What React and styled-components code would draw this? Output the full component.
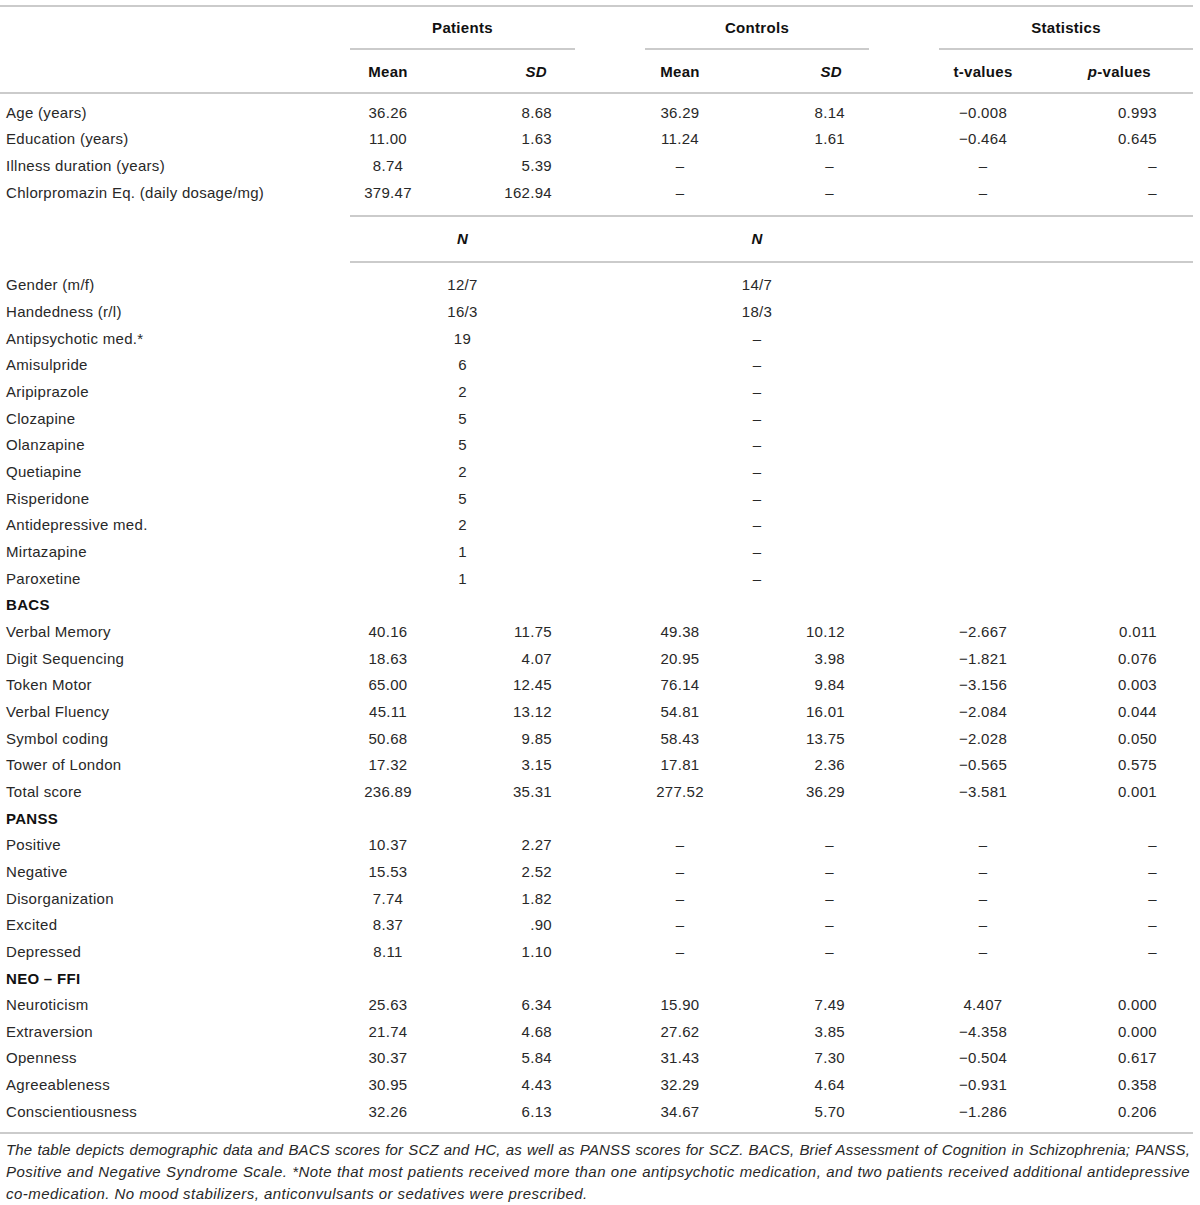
import styled, { createGlobalStyle } from 'styled-components'

const GlobalStyle = createGlobalStyle`
  body {
    margin: 0;
    background: #fff;
    color: #282828;
    font-family: "Liberation Sans", Arial, sans-serif;
    font-size: 15px;
    letter-spacing: 0.3px;
  }
`

const TEMPLATE = '350px 76px 149px 70px 70px 154px 70px 88px 166px'
const RULE = '2px solid #cbcbcb'

// per value column: where the text sits in its cell
const VALUE_COLS = [
  { align: 'center' },
  { align: 'right', pr: 23 },
  { align: 'center' },
  { align: 'right', pr: 24, dashPr: 35 },
  { align: 'center' },
  { align: 'right', pr: 36 },
]

const rowsTop = [
  ['Age (years)', ['36.26', '8.68', '36.29', '8.14', '−0.008', '0.993']],
  ['Education (years)', ['11.00', '1.63', '11.24', '1.61', '−0.464', '0.645']],
  ['Illness duration (years)', ['8.74', '5.39', '–', '–', '–', '–']],
  ['Chlorpromazin Eq. (daily dosage/mg)', ['379.47', '162.94', '–', '–', '–', '–']],
]

const rowsBottom = [
  { label: 'Gender (m/f)', n: ['12/7', '14/7'] },
  { label: 'Handedness (r/l)', n: ['16/3', '18/3'] },
  { label: 'Antipsychotic med.*', n: ['19', '–'] },
  { label: 'Amisulpride', n: ['6', '–'] },
  { label: 'Aripiprazole', n: ['2', '–'] },
  { label: 'Clozapine', n: ['5', '–'] },
  { label: 'Olanzapine', n: ['5', '–'] },
  { label: 'Quetiapine', n: ['2', '–'] },
  { label: 'Risperidone', n: ['5', '–'] },
  { label: 'Antidepressive med.', n: ['2', '–'] },
  { label: 'Mirtazapine', n: ['1', '–'] },
  { label: 'Paroxetine', n: ['1', '–'] },
  { section: 'BACS' },
  { label: 'Verbal Memory', v: ['40.16', '11.75', '49.38', '10.12', '−2.667', '0.011'] },
  { label: 'Digit Sequencing', v: ['18.63', '4.07', '20.95', '3.98', '−1.821', '0.076'] },
  { label: 'Token Motor', v: ['65.00', '12.45', '76.14', '9.84', '−3.156', '0.003'] },
  { label: 'Verbal Fluency', v: ['45.11', '13.12', '54.81', '16.01', '−2.084', '0.044'] },
  { label: 'Symbol coding', v: ['50.68', '9.85', '58.43', '13.75', '−2.028', '0.050'] },
  { label: 'Tower of London', v: ['17.32', '3.15', '17.81', '2.36', '−0.565', '0.575'] },
  { label: 'Total score', v: ['236.89', '35.31', '277.52', '36.29', '−3.581', '0.001'] },
  { section: 'PANSS' },
  { label: 'Positive', v: ['10.37', '2.27', '–', '–', '–', '–'] },
  { label: 'Negative', v: ['15.53', '2.52', '–', '–', '–', '–'] },
  { label: 'Disorganization', v: ['7.74', '1.82', '–', '–', '–', '–'] },
  { label: 'Excited', v: ['8.37', '.90', '–', '–', '–', '–'] },
  { label: 'Depressed', v: ['8.11', '1.10', '–', '–', '–', '–'] },
  { section: 'NEO – FFI' },
  { label: 'Neuroticism', v: ['25.63', '6.34', '15.90', '7.49', '4.407', '0.000'] },
  { label: 'Extraversion', v: ['21.74', '4.68', '27.62', '3.85', '−4.358', '0.000'] },
  { label: 'Openness', v: ['30.37', '5.84', '31.43', '7.30', '−0.504', '0.617'] },
  { label: 'Agreeableness', v: ['30.95', '4.43', '32.29', '4.64', '−0.931', '0.358'] },
  { label: 'Conscientiousness', v: ['32.26', '6.13', '34.67', '5.70', '−1.286', '0.206'] },
]

const Page = styled.div`
  width: 1193px;
  padding-top: 5px;
`

const Grid = styled.div`
  display: grid;
  grid-template-columns: ${TEMPLATE};
`

const GroupHead = styled(Grid)`
  border-top: ${RULE};
`

const GroupCell = styled.div`
  grid-column: span 2;
  height: 43px;
  box-sizing: border-box;
  border-bottom: ${RULE};
  display: flex;
  align-items: center;
  justify-content: center;
  font-weight: bold;
  color: #111;
`

const SubHead = styled(Grid)`
  height: 44px;
  box-sizing: border-box;
  border-bottom: ${RULE};
  align-items: center;
  font-weight: bold;
  color: #111;
`

const HeadCell = styled.div`
  text-align: ${(p) => p.$align};
  padding-right: ${(p) => p.$pr || 0}px;
`

const Body = styled.div`
  padding: ${(p) => p.$pad};
  border-bottom: ${(p) => (p.$ruled ? RULE : 'none')};
`

const Row = styled(Grid)`
  height: 26.667px;
  align-items: center;
`

const Label = styled.div`
  padding-left: 6px;
  white-space: nowrap;
`

const Section = styled(Label)`
  font-weight: bold;
  color: #111;
`

const Cell = styled.div`
  text-align: ${(p) => p.$align};
  padding-right: ${(p) => p.$pr || 0}px;
  grid-column: ${(p) => (p.$span ? `span ${p.$span}` : 'auto')};
  white-space: nowrap;
`

const NHead = styled(Grid)`
  height: 48px;
`

const NBand = styled.div`
  grid-column: span ${(p) => p.$span || 1};
  box-sizing: border-box;
  border-top: ${RULE};
  border-bottom: ${RULE};
  display: flex;
  align-items: center;
  justify-content: center;
  font-weight: bold;
  font-style: italic;
  color: #111;
`

const Note = styled.div`
  padding-top: 5px;
  font-style: italic;
  line-height: 22px;
`

const NoteLine = styled.div`
  white-space: nowrap;
  letter-spacing: ${(p) => p.$spacing}px;
  text-align: ${(p) => (p.$fill ? 'justify' : 'left')};
  text-align-last: ${(p) => (p.$fill ? 'justify' : 'left')};
  padding-left: 6px;
  padding-right: 3px;
`

function ValueRow({ label, values }) {
  const cells = []
  values.forEach((val, i) => {
    const col = VALUE_COLS[i]
    const pr = val === '–' && col.dashPr ? col.dashPr : col.pr
    cells.push(
      <Cell key={i} $align={col.align} $pr={pr}>
        {val}
      </Cell>
    )
    if (i === 1 || i === 3) cells.push(<div key={`g${i}`} />)
  })
  return (
    <Row>
      <Label>{label}</Label>
      {cells}
    </Row>
  )
}

function CountRow({ label, n }) {
  return (
    <Row>
      <Label>{label}</Label>
      <Cell $align="center" $span={2}>{n[0]}</Cell>
      <div />
      <Cell $align="center" $span={2}>{n[1]}</Cell>
    </Row>
  )
}

export default function App() {
  return (
    <Page>
      <GlobalStyle />
      <GroupHead>
        <div />
        <GroupCell>Patients</GroupCell>
        <div />
        <GroupCell>Controls</GroupCell>
        <div />
        <GroupCell>Statistics</GroupCell>
      </GroupHead>
      <SubHead>
        <div />
        <HeadCell $align="center">Mean</HeadCell>
        <HeadCell $align="right" $pr={28}><i>SD</i></HeadCell>
        <div />
        <HeadCell $align="center">Mean</HeadCell>
        <HeadCell $align="right" $pr={27}><i>SD</i></HeadCell>
        <div />
        <HeadCell $align="center">t-values</HeadCell>
        <HeadCell $align="right" $pr={42}><i>p</i>-values</HeadCell>
      </SubHead>

      <Body $pad="5px 0 9px">
        {rowsTop.map(([label, values]) => (
          <ValueRow key={label} label={label} values={values} />
        ))}
      </Body>

      <NHead>
        <div />
        <NBand $span={2}>N</NBand>
        <NBand />
        <NBand $span={2}>N</NBand>
        <NBand $span={3} />
      </NHead>

      <Body $pad="9px 0 7px" $ruled>
        {rowsBottom.map((r, i) => {
          if (r.section) {
            return (
              <Row key={i}>
                <Section>{r.section}</Section>
              </Row>
            )
          }
          if (r.n) return <CountRow key={i} label={r.label} n={r.n} />
          return <ValueRow key={i} label={r.label} values={r.v} />
        })}
      </Body>

      <Note>
        <NoteLine $fill $spacing={0.15}>
          The table depicts demographic data and BACS scores for SCZ and HC, as well as PANSS scores for SCZ. BACS, Brief Assessment of Cognition in Schizophrenia; PANSS,
        </NoteLine>
        <NoteLine $fill $spacing={0.45}>
          Positive and Negative Syndrome Scale. *Note that most patients received more than one antipsychotic medication, and two patients received additional antidepressive
        </NoteLine>
        <NoteLine $spacing={0.45}>
          co-medication. No mood stabilizers, anticonvulsants or sedatives were prescribed.
        </NoteLine>
      </Note>
    </Page>
  )
}
